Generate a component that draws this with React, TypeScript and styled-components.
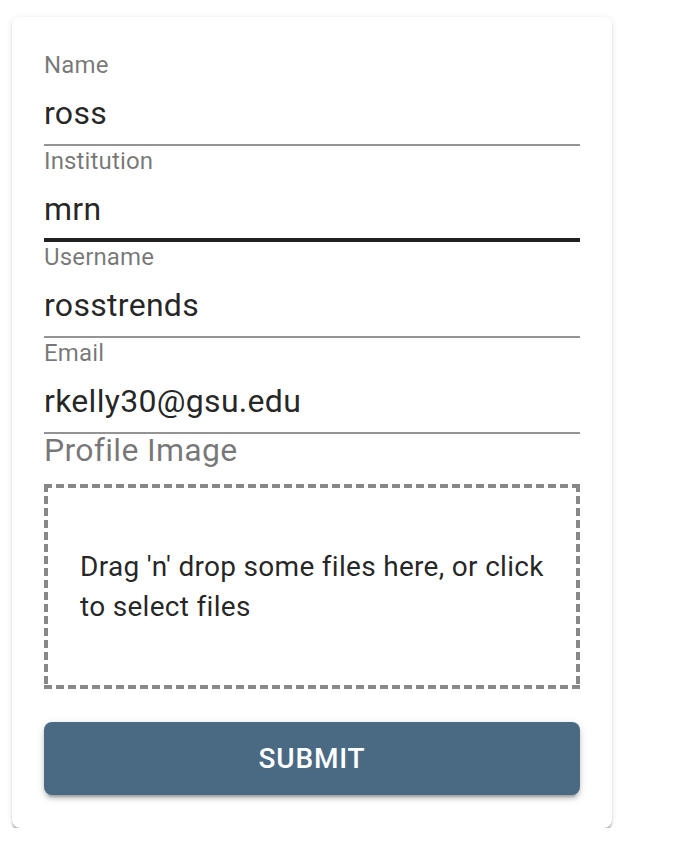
import React from 'react';
import styled, { createGlobalStyle } from 'styled-components';

const GlobalStyle = createGlobalStyle`
  html, body {
    margin: 0;
    padding: 0;
    background: #ffffff;
  }
  body {
    font-family: Roboto, "Liberation Sans", Arial, sans-serif;
    -webkit-font-smoothing: antialiased;
  }
  * {
    box-sizing: border-box;
  }
`;

const Page = styled.div`
  padding: 17px 0 0 12px;
`;

const Card = styled.form`
  width: 600px;
  padding: 33px 32px 33px;
  background: #ffffff;
  border-radius: 8px;
  box-shadow: 0px 3px 2px -1px rgba(0, 0, 0, 0.28), 0px 2px 2px 0px rgba(0, 0, 0, 0.12),
    0px 1px 6px 0px rgba(0, 0, 0, 0.1);
  display: flex;
  flex-direction: column;
`;

const Field = styled.div`
  display: flex;
  flex-direction: column;
`;

const Label = styled.label`
  display: block;
  font-size: 24px;
  line-height: 30px;
  height: 32px;
  color: rgba(0, 0, 0, 0.54);
  letter-spacing: 0.15px;
`;

const Input = styled.input<{ $hover?: boolean }>`
  display: block;
  width: 100%;
  height: 46px;
  margin: 0;
  padding: 8px 0 ${p => (p.$hover ? '6px' : '8px')};
  border: none;
  border-bottom: ${p => (p.$hover ? '4px solid rgba(0, 0, 0, 0.87)' : '2px solid rgba(0, 0, 0, 0.42)')};
  box-sizing: content-box;
  background: transparent;
  font-family: inherit;
  font-size: 32px;
  line-height: 46px;
  letter-spacing: 0.3px;
  color: rgba(0, 0, 0, 0.87);
  outline: none;
`;

const SectionLabel = styled.div`
  font-size: 32px;
  line-height: 32px;
  margin: 0 0 18px;
  color: rgba(0, 0, 0, 0.54);
  letter-spacing: 0.3px;
`;

const dash = '#888888';

const DropZone = styled.div`
  height: 205px;
  display: flex;
  align-items: center;
  padding: 0 28px 0 36px;
  cursor: pointer;
  background:
    linear-gradient(90deg, ${dash} 8px, transparent 8px) top left / 12px 4px repeat-x,
    linear-gradient(90deg, ${dash} 8px, transparent 8px) bottom left / 12px 4px repeat-x,
    linear-gradient(180deg, ${dash} 8px, transparent 8px) top left / 4px 12px repeat-y,
    linear-gradient(180deg, ${dash} 8px, transparent 8px) top right / 4px 12px repeat-y;
`;

const DropText = styled.p`
  margin: 0;
  font-size: 28px;
  line-height: 40px;
  letter-spacing: 0.3px;
  color: rgba(0, 0, 0, 0.87);
`;

const SubmitButton = styled.button`
  margin-top: 33px;
  height: 73px;
  width: 100%;
  border: none;
  border-radius: 8px;
  background: #4a6a84;
  color: #ffffff;
  font-family: inherit;
  font-size: 28px;
  font-weight: 500;
  letter-spacing: 0.8px;
  text-transform: uppercase;
  cursor: pointer;
  box-shadow: 0px 6px 2px -4px rgba(0, 0, 0, 0.2), 0px 4px 4px 0px rgba(0, 0, 0, 0.14),
    0px 2px 10px 0px rgba(0, 0, 0, 0.12);
`;

const fields = [
  { id: 'name', label: 'Name', value: 'ross' },
  { id: 'institution', label: 'Institution', value: 'mrn', hover: true },
  { id: 'username', label: 'Username', value: 'rosstrends' },
  { id: 'email', label: 'Email', value: 'rkelly30@gsu.edu' },
];

export default function App() {
  return (
    <>
      <GlobalStyle />
      <Page>
        <Card onSubmit={e => e.preventDefault()}>
          {fields.map(f => (
            <Field key={f.id}>
              <Label htmlFor={f.id}>{f.label}</Label>
              <Input id={f.id} defaultValue={f.value} $hover={f.hover} />
            </Field>
          ))}
          <SectionLabel>Profile Image</SectionLabel>
          <DropZone>
            <DropText>Drag 'n' drop some files here, or click to select files</DropText>
          </DropZone>
          <SubmitButton type="submit">Submit</SubmitButton>
        </Card>
      </Page>
    </>
  );
}
